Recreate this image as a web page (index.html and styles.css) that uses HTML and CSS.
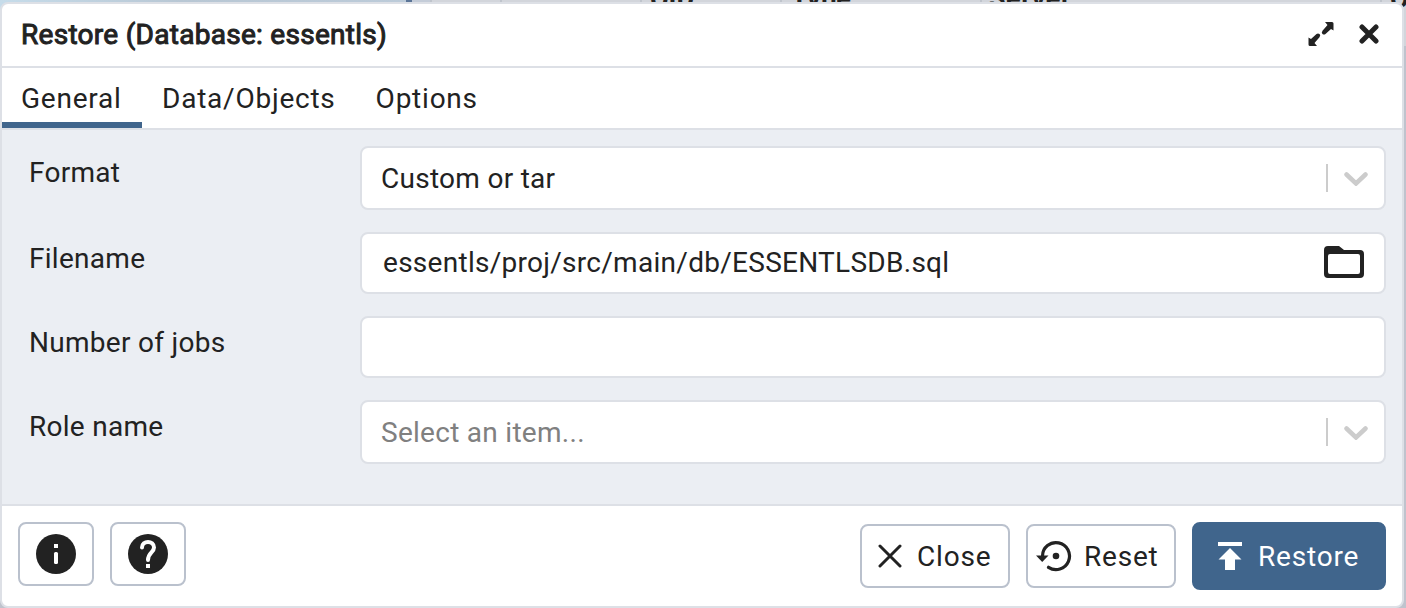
FILE: index.html
```html
<!DOCTYPE html>
<html lang="en">
<head>
<meta charset="utf-8">
<title>Restore</title>
<link rel="stylesheet" href="styles.css">
</head>
<body>
<div class="backdrop" aria-hidden="true">
  <div class="tree-edge"></div>
  <div class="grid-head">
    <span class="col c-blank"></span><span class="col c-a"></span><span class="col c-b"></span><span class="col c-oid">OID</span><span class="col c-type">Type</span><span class="col c-server">Server</span><span class="col c-last">O</span>
  </div>
</div>
<main class="dialog">
  <header class="titlebar">
    <h1 class="title">Restore (Database: essentls)</h1>
    <svg class="maximize" viewBox="0 0 26 26"><path d="M17 1H24q1.500 0 1.500 1.500V9.500L23 8 17.500 13q-1.500 1-3 0t0-3.300L19.500 4zM9 25H2Q.5 25 .5 23.500V16.500L3 18 8.500 13q1.500-1 3 0t0 3.300L6.500 22z"/></svg>
    <svg class="dismiss" viewBox="0 0 20 20"><path d="M3 3 17 17M17 3 3 17"/></svg>
  </header>
  <nav class="tabs">
    <span class="tab active">General</span><span class="tab">Data/Objects</span><span class="tab">Options</span>
  </nav>
  <section class="form">
    <label class="label">Format</label>
    <div class="field select"><span class="value">Custom or tar</span><span class="separator"></span><svg class="chevron" viewBox="0 0 24 14"><path d="M2.500 2.500 12 11.500 21.500 2.500"/></svg></div>
    <label class="label">Filename</label>
    <div class="field file"><span class="value">essentls/proj/src/main/db/ESSENTLSDB.sql</span><svg class="folder" viewBox="0 0 40 32"><path fill-rule="evenodd" d="M4 0H15L20 4H36Q40 4 40 8V28Q40 32 36 32H4Q0 32 0 28V4Q0 0 4 0ZM6 8Q4 8 4 10V26Q4 28 6 28H34Q36 28 36 26V10Q36 8 34 8Z"/></svg></div>
    <label class="label">Number of jobs</label>
    <div class="field"></div>
    <label class="label">Role name</label>
    <div class="field select"><span class="value placeholder">Select an item...</span><span class="separator"></span><svg class="chevron" viewBox="0 0 24 14"><path d="M2.500 2.500 12 11.500 21.500 2.500"/></svg></div>
  </section>
  <footer class="footer">
    <button class="btn icon-btn"><svg class="round" viewBox="0 0 40 40"><circle cx="20" cy="20" r="20"/><path class="cut" d="M18 10h4v4h-4z"/><rect class="cut" x="18" y="18" width="4" height="12" rx="1.500"/></svg></button>
    <button class="btn icon-btn"><svg class="round" viewBox="0 0 40 40"><circle cx="20" cy="20" r="20"/><path class="cut" d="M18 30h4v4h-4z"/><path class="hook" d="M14 13.500C14 6 26 6 26 13.500C26 18.500 20 18.500 20 26"/></svg></button>
    <span class="spacer"></span>
    <button class="btn close"><svg class="x" viewBox="0 0 24 24"><path d="M2 2 22 22M22 2 2 22"/></svg><span class="caption">Close</span></button>
    <button class="btn reset"><svg class="history" viewBox="0 0 36 32"><path class="arc" d="M6.500 16A13.500 13.500 0 1 1 12.500 27.300"/><path d="M0 15.500H12.500L6.200 22Z"/><circle cx="20" cy="16" r="3.300"/></svg><span class="caption">Reset</span></button>
    <button class="btn primary"><svg class="upload" viewBox="0 0 24 28"><path d="M0 0h24v4H0zM12 6 23.500 17.500H17V28H7V17.500H.5z"/></svg><span class="caption">Restore</span></button>
  </footer>
</main>
</body>
</html>
```
FILE: styles.css
```css
* { box-sizing: border-box; }
body {
  margin: 0;
  width: 1406px;
  height: 608px;
  overflow: hidden;
  position: relative;
  padding-top: 2px;
  background: #bfc3cd;
  font: 28px/34px Roboto, sans-serif;
  letter-spacing: 0.28px;
  color: #222;
}
.backdrop {
  position: absolute;
  inset: 0 0 auto 0;
  height: 46px;
  display: flex;
  overflow: hidden;
  background: #d2d5db;
}
.tree-edge {
  width: 412px;
  flex: none;
  border-right: 6px solid #5b7597;
  background: linear-gradient(90deg, #c6dcea, #b8c7d4 45%, #bccbd9);
}
.grid-head {
  display: flex;
  font-size: 27px;
  font-weight: 700;
  line-height: 30px;
  letter-spacing: 0;
}
.col {
  height: 64px;
  margin-top: -16px;
  flex: none;
  border-right: 2px solid #bfc4cc;
  padding-left: 8px;
}
.c-blank { width: 20px; background: #c4ccd8; }
.c-a { width: 70px; }
.c-b { width: 140px; }
.c-oid { width: 140px; }
.c-type { width: 200px; padding-left: 9px; letter-spacing: 0.3px; }
.c-server { width: 400px; padding-left: 7px; letter-spacing: 0.5px; }
.c-last { width: 30px; padding-left: 8px; }
.dialog {
  position: relative;
  width: 1404px;
  height: 606px;
  display: flex;
  flex-direction: column;
  border: 2px solid #dde0e6;
  border-radius: 8px;
  background: #fff;
  overflow: hidden;
}
.titlebar {
  height: 64px;
  display: flex;
  align-items: center;
  padding: 0 23px 2px 19px;
  border-bottom: 2px solid #dde0e6;
}
.title {
  margin: 0 auto 0 0;
  padding-top: 2px;
  font-size: 28px;
  font-weight: 400;
  letter-spacing: 0.28px;
  -webkit-text-stroke: 1px #222;
}
.maximize { width: 26px; height: 26px; fill: #222; margin-right: 25px; }
.dismiss { width: 20px; height: 20px; stroke: #222; stroke-width: 5; stroke-linecap: round; }
.tabs {
  height: 62px;
  display: flex;
  border-bottom: 2px solid #dde0e6;
}
.tab {
  padding: 14px 20px 0 20px;
  letter-spacing: 0.77px;
}
.active { width: 140px; padding-left: 19px; border-bottom: 6px solid #40658c; }
.form {
  flex: 1;
  display: grid;
  grid-template-columns: 331px 1026px;
  grid-template-rows: 64px 62px 62px 64px;
  row-gap: 22px;
  padding: 16px 16px 0 27px;
  background: #ebeef3;
}
.label { padding-top: 10px; }
.field {
  display: flex;
  align-items: center;
  border: 2px solid #dde0e6;
  border-radius: 8px;
  background: #fff;
  padding: 2px 16px 0 19px;
}
.file { padding: 0 20px 1px 21px; }
.value { margin-right: auto; }
.placeholder { color: #808080; }
.separator { width: 2px; height: 28px; background: #ccc; margin: -2px 16px 0 0; }
.chevron { width: 24px; height: 14px; fill: none; stroke: #ccc; stroke-width: 4.5; stroke-linecap: round; }
.folder { width: 40px; height: 32px; fill: #222; margin-bottom: 1px; }
.footer {
  height: 102px;
  display: flex;
  gap: 16px;
  padding: 16px;
  border-top: 2px solid #dde0e6;
}
.spacer { flex: 1; }
.btn {
  height: 64px;
  display: flex;
  align-items: center;
  border: 2px solid #bac1cd;
  border-radius: 8px;
  background: #fff;
  color: #222;
  font: inherit;
  letter-spacing: 0.8px;
  padding: 0;
  flex: none;
}
.caption { padding-top: 2px; }
.icon-btn { width: 76px; justify-content: center; }
.round { width: 40px; height: 40px; fill: #222; }
.cut { fill: #fff; }
.hook { fill: none; stroke: #fff; stroke-width: 4; stroke-linecap: round; }
.close { width: 150px; margin-top: 2px; padding-left: 16px; }
.x { width: 24px; height: 24px; margin-right: 15px; stroke: #222; stroke-width: 3; stroke-linecap: round; }
.reset { width: 150px; margin-top: 2px; padding-left: 8px; }
.history { width: 36px; height: 32px; margin-right: 12px; fill: #222; }
.arc { fill: none; stroke: #222; stroke-width: 3.2; stroke-linecap: round; }
.primary { width: 194px; height: 68px; background: #40658c; border-color: #40658c; color: #fff; padding-left: 24px; }
.upload { width: 24px; height: 28px; margin-right: 16px; fill: #fff; }
```
